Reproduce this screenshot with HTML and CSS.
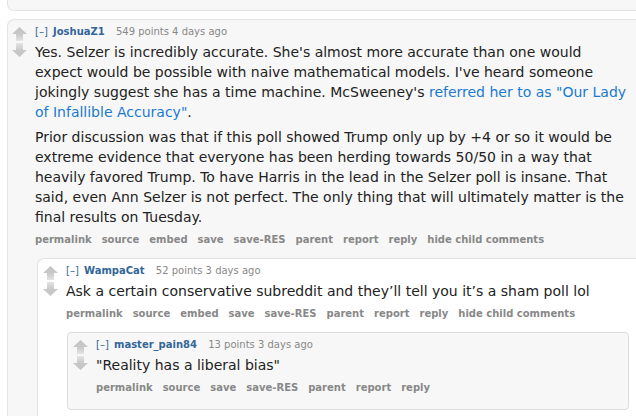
FILE: index.html
```html
<!DOCTYPE html>
<html lang="en">
<head>
<meta charset="utf-8">
<title>Comments</title>
<link rel="stylesheet" href="styles.css">
</head>
<body>
<div class="page">
  <div class="prev"></div>

  <div class="comment odd">
    <div class="row">
      <div class="midcol">
        <svg class="arrow" viewBox="0 0 15 14" width="15" height="14"><defs><linearGradient id="gu" x1="0" y1="0" x2="0" y2="1"><stop offset="0" stop-color="#c4c4c4"/><stop offset="0.5" stop-color="#c8c8c8"/><stop offset="1" stop-color="#e4e4e4"/></linearGradient></defs><path d="M7.5 0 L15 7 L11 7 L11 14 L4 14 L4 7 L0 7 Z" fill="url(#gu)"/></svg>
        <svg class="arrow" viewBox="0 0 15 14" width="15" height="14"><defs><linearGradient id="gd" x1="0" y1="0" x2="0" y2="1"><stop offset="0" stop-color="#e4e4e4"/><stop offset="0.5" stop-color="#c8c8c8"/><stop offset="1" stop-color="#c4c4c4"/></linearGradient></defs><path d="M7.5 14 L15 7 L11 7 L11 0 L4 0 L4 7 L0 7 Z" fill="url(#gd)"/></svg>
      </div>
      <div class="entry">
        <p class="tagline"><a class="expand">[–]</a> <a class="author">JoshuaZ1</a> <span class="score">549 points 4 days ago</span></p>
        <div class="md">
          <p>Yes. Selzer is incredibly accurate. She's almost more accurate than one would expect would be possible with naive mathematical models. I've heard someone jokingly suggest she has a time machine. McSweeney's <a class="link">referred her to as "Our Lady of Infallible Accuracy"</a>.</p>
          <p>Prior discussion was that if this poll showed Trump only up by +4 or so it would be extreme evidence that everyone has been herding towards 50/50 in a way that heavily favored Trump. To have Harris in the lead in the Selzer poll is insane. That said, even Ann Selzer is not perfect. The only thing that will ultimately matter is the final results on Tuesday.</p>
        </div>
        <ul class="buttons">
          <li>permalink</li><li>source</li><li>embed</li><li>save</li><li>save-RES</li><li>parent</li><li>report</li><li>reply</li><li>hide child comments</li>
        </ul>
      </div>
    </div>

    <div class="comment even child">
      <div class="row">
        <div class="midcol">
          <svg class="arrow" viewBox="0 0 15 14" width="15" height="14"><path d="M7.5 0 L15 7 L11 7 L11 14 L4 14 L4 7 L0 7 Z" fill="url(#gu)"/></svg>
          <svg class="arrow" viewBox="0 0 15 14" width="15" height="14"><path d="M7.5 14 L15 7 L11 7 L11 0 L4 0 L4 7 L0 7 Z" fill="url(#gd)"/></svg>
        </div>
        <div class="entry">
          <p class="tagline"><a class="expand">[–]</a> <a class="author">WampaCat</a> <span class="score">52 points 3 days ago</span></p>
          <div class="md">
            <p>Ask a certain conservative subreddit and they’ll tell you it’s a sham poll lol</p>
          </div>
          <ul class="buttons">
            <li>permalink</li><li>source</li><li>embed</li><li>save</li><li>save-RES</li><li>parent</li><li>report</li><li>reply</li><li>hide child comments</li>
          </ul>
        </div>
      </div>

      <div class="comment odd child last">
        <div class="row">
          <div class="midcol">
            <svg class="arrow" viewBox="0 0 15 14" width="15" height="14"><path d="M7.5 0 L15 7 L11 7 L11 14 L4 14 L4 7 L0 7 Z" fill="url(#gu)"/></svg>
            <svg class="arrow" viewBox="0 0 15 14" width="15" height="14"><path d="M7.5 14 L15 7 L11 7 L11 0 L4 0 L4 7 L0 7 Z" fill="url(#gd)"/></svg>
          </div>
          <div class="entry">
            <p class="tagline"><a class="expand">[–]</a> <a class="author">master_pain84</a> <span class="score">13 points 3 days ago</span></p>
            <div class="md">
              <p>"Reality has a liberal bias"</p>
            </div>
            <ul class="buttons">
              <li>permalink</li><li>source</li><li>save</li><li>save-RES</li><li>parent</li><li>report</li><li>reply</li>
            </ul>
          </div>
        </div>
      </div>
    </div>
  </div>
</div>
</body>
</html>
```

FILE: styles.css
```css
html, body {
  margin: 0;
  padding: 0;
  background: #ffffff;
  overflow: hidden;
}

body {
  font-family: "DejaVu Sans", Verdana, sans-serif;
  color: #222222;
}

.page {
  width: 629px;
  padding-left: 7px;
}

.prev {
  height: 10px;
  background: #f7f7f7;
  border-left: 1px solid #e3e3e3;
  border-bottom: 1px solid #e3e3e3;
  border-bottom-left-radius: 7px;
  margin-bottom: 8px;
}

.comment {
  background: #f7f7f7;
  border: 1px solid #e3e3e3;
  border-right: none;
  border-bottom: none;
  border-top-left-radius: 7px;
  padding-bottom: 20px;
}

.comment.even {
  background: #ffffff;
}

.comment.child {
  margin-top: 11px;
  margin-left: 29px;
}

.comment.last {
  border: 1px solid #dedede;
  border-radius: 4px;
  margin-top: 11px;
  margin-right: 7px;
  padding-bottom: 14px;
}

.row {
  display: flex;
  align-items: flex-start;
}

.midcol {
  display: flex;
  flex-direction: column;
  gap: 2px;
  margin-left: 4px;
  margin-top: 7px;
  width: 15px;
  flex: none;
}

.comment.child .midcol {
  margin-left: 5px;
}

.arrow {
  display: block;
}

.entry {
  margin-left: 8px;
  padding-top: 5px;
  flex: 1;
  min-width: 0;
}

.tagline {
  margin: 0;
  font-size: 10px;
  line-height: 14px;
  color: #888888;
}

.expand {
  color: #369;
}

.author {
  color: #369;
  font-weight: bold;
  margin-left: 2px;
  margin-right: 8px;
}

.md {
  margin-top: 3px;
  padding-right: 6px;
  font-size: 14px;
  line-height: 20px;
  color: #222222;
}

.md p {
  margin: 0 0 5px 0;
}

.md p:last-child {
  margin-bottom: 0;
}

.link {
  color: #1a7ad0;
}

.buttons {
  list-style: none;
  margin: 6px 0 0 0;
  padding: 0;
  display: flex;
  gap: 10px;
  font-size: 10px;
  line-height: 14px;
  font-weight: bold;
  color: #888888;
}
```
